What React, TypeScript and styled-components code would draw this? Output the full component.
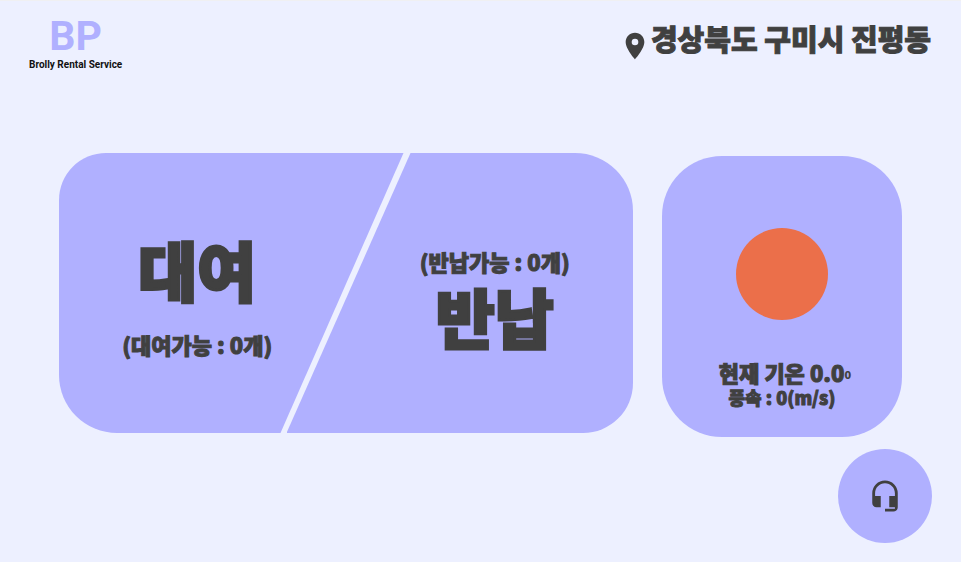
import React from "react";
import styled, { createGlobalStyle } from "styled-components";

const colors = {
  page: "#edf0ff",
  panel: "#b0b0ff",
  ink: "#404040",
  sun: "#eb6f4a",
};

const GlobalStyle = createGlobalStyle`
  *, *::before, *::after { box-sizing: border-box; }
  body {
    margin: 0;
    background: ${colors.page};
    color: ${colors.ink};
    font-family: "Noto Sans CJK KR", "Noto Sans", sans-serif;
    font-weight: 900;
  }
  button { font: inherit; color: inherit; border: 0; cursor: pointer; }
  h1, h2, p { margin: 0; font-weight: inherit; }
`;

const Page = styled.div`
  display: flex;
  flex-direction: column;
  min-height: 100vh;
  border-top: 1px solid #f0f0f2;
`;

const Header = styled.header`
  display: flex;
  justify-content: space-between;
  align-items: flex-start;
  height: 152px;
  padding: 14px 30px 0 29px;
`;

const Logo = styled.a`
  display: flex;
  flex-direction: column;
  align-items: center;
  color: #111;
  text-decoration: none;
  font-family: Roboto, sans-serif;
`;

const LogoMark = styled.span`
  color: ${colors.panel};
  font-size: 41px;
  line-height: 42px;
  font-weight: 700;
`;

const LogoName = styled.span`
  font-size: 10px;
  line-height: 16px;
  font-weight: 700;
`;

const Place = styled.div`
  display: flex;
  align-items: center;
  gap: 4px;
`;

const Pin = styled.svg`
  width: 24px;
  height: 30px;
  margin-top: 16px;
  fill: ${colors.ink};
`;

const Bold = styled.span<{ $size: number; $line: number; $stroke?: number }>`
  font-size: ${(p) => p.$size}px;
  line-height: ${(p) => p.$line}px;
  white-space: nowrap;
  -webkit-text-stroke: ${(p) => p.$stroke ?? 1}px ${colors.ink};
`;

const Main = styled.main`
  display: flex;
  align-items: flex-start;
  gap: 29px;
  padding: 0 59px;
`;

const Actions = styled.div`
  display: flex;
  flex: 1;
  height: 280px;
`;

const ActionButton = styled.button`
  display: flex;
  flex: 1 1 0;
  flex-direction: column;
  align-items: center;
  justify-content: flex-start;
  background: ${colors.panel};
`;

const RentButton = styled(ActionButton)`
  padding: 69px 68px 0 0;
  gap: 20px;
  border-radius: 47px 0 0 58px;
  clip-path: polygon(0 0, 100% 0, calc(100% - 123px) 100%, 0 100%);
`;

const ReturnButton = styled(ActionButton)`
  margin-left: -117px;
  padding: 92px 0 0 70px;
  border-radius: 0 58px 50px 0;
  clip-path: polygon(124px 0, 100% 0, 100% 100%, 0 100%);
`;

const Weather = styled.section`
  display: flex;
  flex-direction: column;
  align-items: center;
  flex: 0 0 240px;
  height: 281px;
  margin-top: 3px;
  padding-top: 72px;
  border-radius: 60px;
  background: ${colors.panel};
`;

const Sun = styled.div`
  width: 92px;
  height: 92px;
  margin-bottom: 38px;
  border-radius: 50%;
  background: ${colors.sun};
`;

const Temperature = styled.p`
  display: flex;
  align-items: flex-end;
  padding-left: 6px;
`;

const Footer = styled.footer`
  display: flex;
  justify-content: flex-end;
  padding: 12px 29px 0;
`;

const HelpButton = styled.button`
  display: grid;
  place-items: center;
  width: 94px;
  height: 94px;
  padding: 0;
  border-radius: 50%;
  background: ${colors.panel};
`;

const Headset = styled.svg`
  width: 34px;
  height: 34px;
  fill: ${colors.ink};
`;

export default function App() {
  return (
    <>
      <GlobalStyle />
      <Page>
        <Header>
          <Logo href="#">
            <LogoMark>BP</LogoMark>
            <LogoName>Brolly Rental Service</LogoName>
          </Logo>
          <Place>
            <Pin viewBox="3 1 18 22" aria-hidden="true">
              <path d="M12 2C8.13 2 5 5.13 5 9c0 5.25 7 13 7 13s7-7.75 7-13c0-3.87-3.13-7-7-7zm0 9.5a2.5 2.5 0 0 1 0-5 2.5 2.5 0 0 1 0 5z" />
            </Pin>
            <Bold as="h1" $size={29} $line={44}>경상북도 구미시 진평동</Bold>
          </Place>
        </Header>
        <Main>
          <Actions>
            <RentButton type="button">
              <Bold $size={64} $line={92} $stroke={3}>대여</Bold>
              <Bold $size={22} $line={20}>(대여가능 : 0개)</Bold>
            </RentButton>
            <ReturnButton type="button">
              <Bold $size={22} $line={32}>(반납가능 : 0개)</Bold>
              <Bold $size={64} $line={76} $stroke={3}>반납</Bold>
            </ReturnButton>
          </Actions>
          <Weather aria-label="날씨">
            <Sun />
            <Temperature>
              <Bold $size={22} $line={28}>현재 기온 0.0</Bold>
              <Bold $size={11} $line={24} $stroke={0}>0</Bold>
            </Temperature>
            <Bold as="p" $size={18} $line={22}>풍속 : 0(m/s)</Bold>
          </Weather>
        </Main>
        <Footer>
          <HelpButton type="button" aria-label="고객센터">
            <Headset viewBox="0 0 24 24" aria-hidden="true">
              <path d="M12 1a9 9 0 0 0-9 9v7c0 1.66 1.34 3 3 3h3v-8H5v-2c0-3.87 3.13-7 7-7s7 3.13 7 7v2h-4v8h4v1h-7v2h6c1.66 0 3-1.34 3-3V10a9 9 0 0 0-9-9z" />
            </Headset>
          </HelpButton>
        </Footer>
      </Page>
    </>
  );
}
